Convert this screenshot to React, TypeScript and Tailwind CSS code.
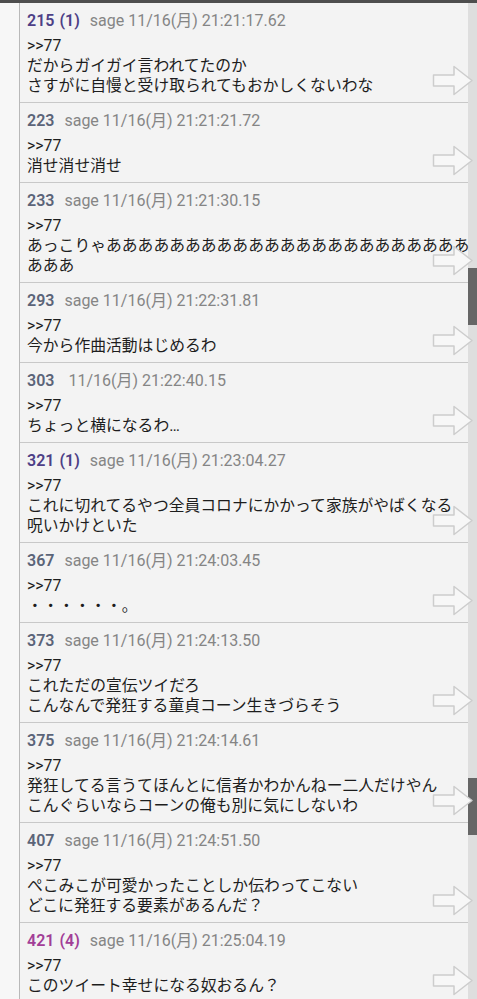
type Post = {
  no: string;
  count?: string;
  mail: string;
  date: string;
  lines: string[];
  tone: "deep" | "plain" | "pink";
};

const posts: Post[] = [
  { no: "215", count: "(1)", mail: "sage", date: "11/16(月) 21:21:17.62", tone: "deep", lines: ["だからガイガイ言われてたのか", "さすがに自慢と受け取られてもおかしくないわな"] },
  { no: "223", mail: "sage", date: "11/16(月) 21:21:21.72", tone: "plain", lines: ["消せ消せ消せ"] },
  { no: "233", mail: "sage", date: "11/16(月) 21:21:30.15", tone: "plain", lines: ["あっこりゃあああああああああああああああああああああああ", "あああ"] },
  { no: "293", mail: "sage", date: "11/16(月) 21:22:31.81", tone: "plain", lines: ["今から作曲活動はじめるわ"] },
  { no: "303", mail: "", date: "11/16(月) 21:22:40.15", tone: "plain", lines: ["ちょっと横になるわ…"] },
  { no: "321", count: "(1)", mail: "sage", date: "11/16(月) 21:23:04.27", tone: "deep", lines: ["これに切れてるやつ全員コロナにかかって家族がやばくなる", "呪いかけといた"] },
  { no: "367", mail: "sage", date: "11/16(月) 21:24:03.45", tone: "plain", lines: ["・・・・・・。"] },
  { no: "373", mail: "sage", date: "11/16(月) 21:24:13.50", tone: "plain", lines: ["これただの宣伝ツイだろ", "こんなんで発狂する童貞コーン生きづらそう"] },
  { no: "375", mail: "sage", date: "11/16(月) 21:24:14.61", tone: "plain", lines: ["発狂してる言うてほんとに信者かわかんねー二人だけやん", "こんぐらいならコーンの俺も別に気にしないわ"] },
  { no: "407", mail: "sage", date: "11/16(月) 21:24:51.50", tone: "plain", lines: ["ぺこみこが可愛かったことしか伝わってこない", "どこに発狂する要素があるんだ？"] },
  { no: "421", count: "(4)", mail: "sage", date: "11/16(月) 21:25:04.19", tone: "pink", lines: ["このツイート幸せになる奴おるん？"] },
];

const toneClass = {
  deep: "text-[#4d3f86]",
  plain: "text-[#5b6478]",
  pink: "text-[#a23e97]",
};

function Arrow() {
  return (
    <svg width="42" height="31" viewBox="0 0 42 31" className="absolute right-[-6px] bottom-[6px] z-10">
      <path
        d="M1.5 10 H22 V1.5 L40 15.5 L22 29.5 V21 H1.5 Z"
        fill="#f7f7f7"
        stroke="#cdcdcd"
        strokeWidth="1.5"
        strokeLinejoin="round"
      />
    </svg>
  );
}

function Row({ p }: { p: Post }) {
  return (
    <div className="relative border-b border-[#c8c8c8] pl-[7px] pr-1 pt-[7px] pb-[6px]">
      <div className="flex h-[22px] items-center text-[16px] leading-[22px] whitespace-nowrap">
        <span className={`mr-[10px] font-semibold ${toneClass[p.tone]}`}>
          {p.no}
          {p.count && <span className="ml-[5px]">{p.count}</span>}
        </span>
        <span className="mr-[4px] text-[#858585]">{p.mail}</span>
        <span className="text-[#858585]">{p.date}</span>
      </div>
      <div className="mt-[4px] text-[15.8px] leading-[20px] text-[#1d1d1d]">
        <div>&gt;&gt;77</div>
        {p.lines.map((l, i) => (
          <div key={i} className="whitespace-nowrap">
            {l}
          </div>
        ))}
      </div>
      <Arrow />
    </div>
  );
}

export default function App() {
  return (
    <div
      className="flex h-[999px] w-[477px] flex-col overflow-hidden bg-[#f6f6f6]"
      style={{ fontFamily: 'Roboto, "Noto Sans CJK JP", sans-serif' }}
    >
      <div className="h-[3px] shrink-0 bg-[#4e4e4e]" />
      <div className="flex min-h-0 flex-1">
        <div className="w-[19px] shrink-0 bg-[#f7f7f7]" />
        <div className="min-w-0 flex-1 border-l border-[#b9b9b9] bg-[#f3f3f3]">
          {posts.map((p) => (
            <Row key={p.no} p={p} />
          ))}
        </div>
        <div className="flex w-[9px] shrink-0 flex-col bg-[#dedede]">
          <div className="mt-[265px] h-[57px] bg-[#666666]" />
          <div className="mt-[453px] h-[57px] bg-[#666666]" />
        </div>
      </div>
    </div>
  );
}
